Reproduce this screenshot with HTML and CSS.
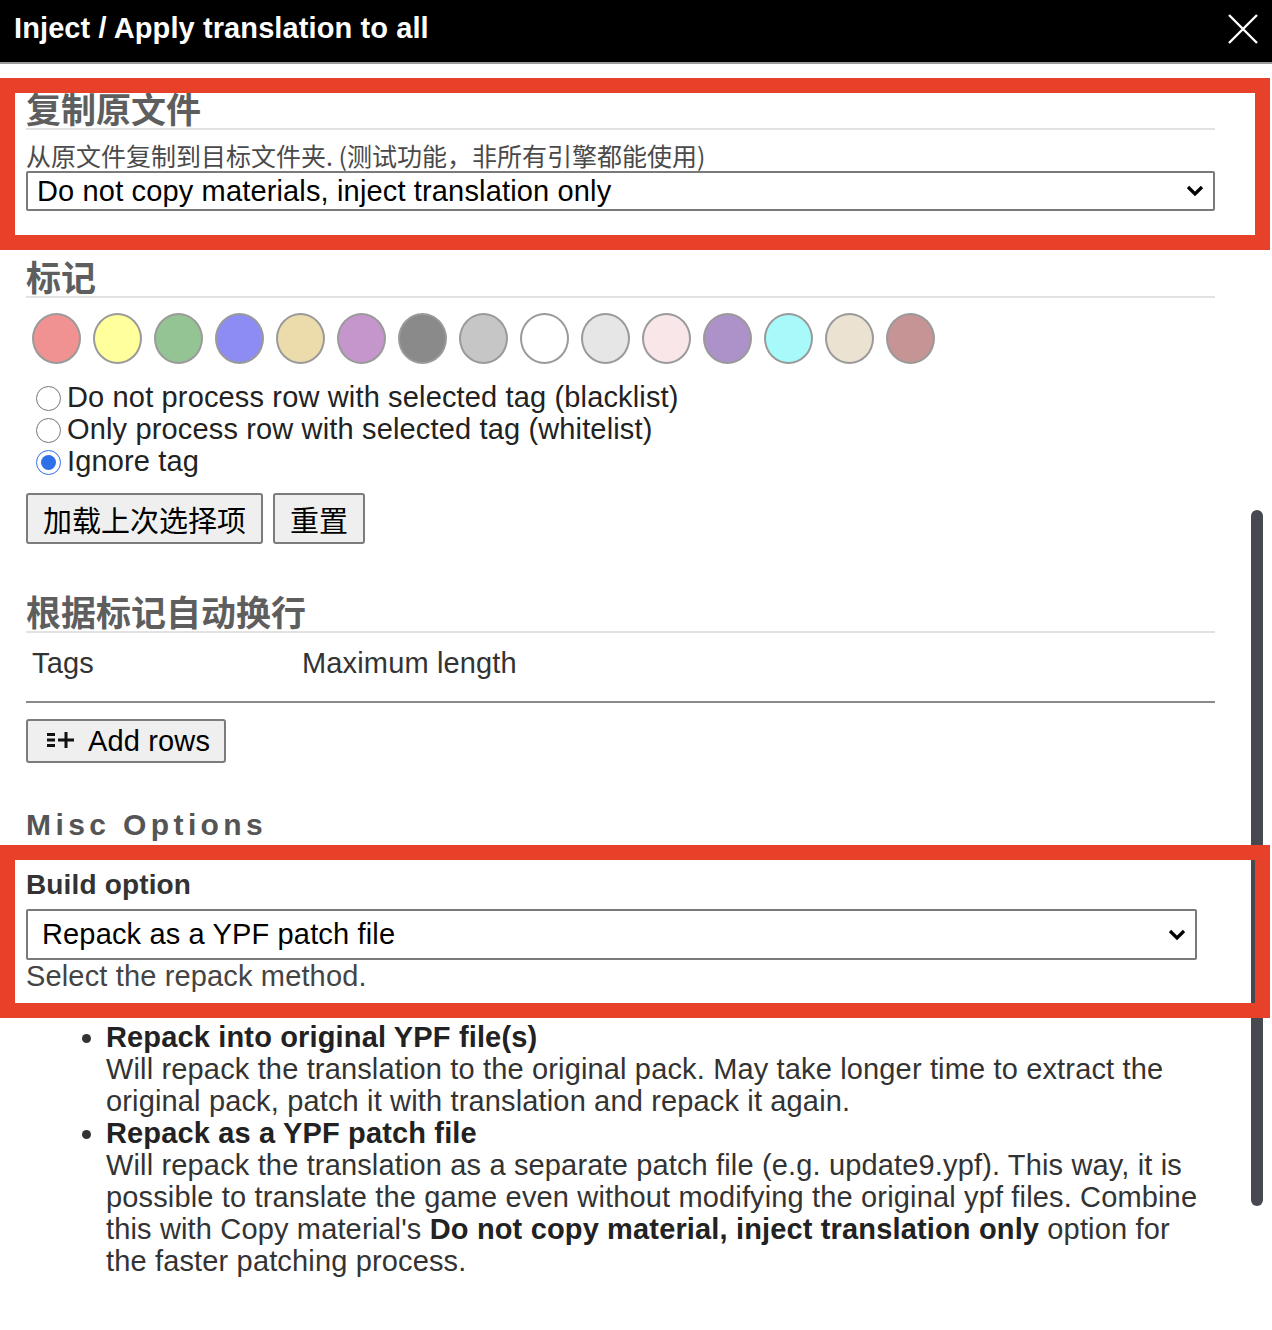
FILE: index.html
```html
<!DOCTYPE html>
<html lang="zh">
<head>
<meta charset="utf-8">
<title>Inject / Apply translation to all</title>
<link rel="stylesheet" href="styles.css">
</head>
<body>
<div class="dialog">
  <header class="titlebar">
    <span class="title">Inject / Apply translation to all</span>
    <svg class="close" width="32" height="32" viewBox="0 0 32 32"><path d="M2 2 L30 30 M30 2 L2 30" stroke="#fff" stroke-width="2.4" fill="none"/></svg>
  </header>

  <main class="content">
    <h3 class="sec-head first">复制原文件</h3>
    <div class="desc">从原文件复制到目标文件夹. (测试功能，非所有引擎都能使用)</div>
    <div class="select sel-copy">
      <span>Do not copy materials, inject translation only</span>
      <svg class="chev" width="20" height="14" viewBox="0 0 20 14"><path d="M3 3 L10 10 L17 3" stroke="#000" stroke-width="3.2" fill="none"/></svg>
    </div>

    <h3 class="sec-head tags-head">标记</h3>
    <div class="swatches">
      <span class="sw" style="background:#f09292"></span>
      <span class="sw" style="background:#ffff9c"></span>
      <span class="sw" style="background:#94c494"></span>
      <span class="sw" style="background:#8c8cf4"></span>
      <span class="sw" style="background:#ecdcac"></span>
      <span class="sw" style="background:#c496cc"></span>
      <span class="sw" style="background:#8a8a8a"></span>
      <span class="sw" style="background:#c6c6c6"></span>
      <span class="sw" style="background:#ffffff"></span>
      <span class="sw" style="background:#e6e6e6"></span>
      <span class="sw" style="background:#f8e6e8"></span>
      <span class="sw" style="background:#ac92c8"></span>
      <span class="sw" style="background:#a8fafa"></span>
      <span class="sw" style="background:#ebe2d2"></span>
      <span class="sw" style="background:#c69494"></span>
    </div>
    <div class="radios">
      <label class="radio"><input type="radio" name="t">Do not process row with selected tag (blacklist)</label>
      <label class="radio"><input type="radio" name="t">Only process row with selected tag (whitelist)</label>
      <label class="radio"><input type="radio" name="t" checked>Ignore tag</label>
    </div>
    <div class="btn-row">
      <button class="btn cjk-btn">加载上次选择项</button>
      <button class="btn cjk-btn">重置</button>
    </div>

    <h3 class="sec-head wrap-head">根据标记自动换行</h3>
    <div class="table-head">
      <span class="col-tags">Tags</span>
      <span class="col-max">Maximum length</span>
    </div>
    <button class="btn add-btn">
      <svg class="add-ico" width="30" height="16" viewBox="0 0 30 16"><rect x="1" y="1" width="8" height="3" fill="#111"/><rect x="1" y="6.5" width="8" height="3" fill="#111"/><rect x="1" y="12" width="8" height="3" fill="#111"/><rect x="12" y="6.5" width="16" height="3" fill="#111"/><rect x="18.5" y="0" width="3" height="16" fill="#111"/></svg>
      <span>Add rows</span>
    </button>

    <h3 class="misc-head">Misc Options</h3>
    <div class="field-label">Build option</div>
    <div class="select sel-build">
      <span>Repack as a YPF patch file</span>
      <svg class="chev" width="20" height="14" viewBox="0 0 20 14"><path d="M3 3 L10 10 L17 3" stroke="#000" stroke-width="3.2" fill="none"/></svg>
    </div>
    <div class="hint">Select the repack method.</div>
    <ul class="opts">
      <li><b>Repack into original YPF file(s)</b><br>Will repack the translation to the original pack. May take longer time to extract the original pack, patch it with translation and repack it again.</li>
      <li><b>Repack as a YPF patch file</b><br>Will repack the translation as a separate patch file (e.g. update9.ypf). This way, it is possible to translate the game even without modifying the original ypf files. Combine this with Copy material's <b>Do not copy material, inject translation only</b> option for the faster patching process.</li>
    </ul>
  </main>

  <div class="scrollbar"></div>
  <div class="mark mark-1"></div>
  <div class="mark mark-2"></div>
</div>
</body>
</html>
```

FILE: styles.css
```css
html, body {
  margin: 0;
  padding: 0;
  background: #fff;
}
body {
  font-family: "Liberation Sans", Arial, "Noto Sans CJK SC", sans-serif;
  color: #222;
  letter-spacing: 0.15px;
}
.dialog {
  position: relative;
  width: 1272px;
  height: 1330px;
  overflow: hidden;
}
.titlebar {
  height: 62px;
  background: #000;
  border-bottom: 2px solid #9a9a9a;
  display: flex;
  align-items: center;
  justify-content: space-between;
  padding: 0 13px 0 14px;
}
.title {
  color: #fff;
  font-weight: bold;
  font-size: 29px;
  letter-spacing: 0.1px;
  margin-top: -6px;
}
.close {
  margin-top: -4px;
}
.content {
  padding: 0 57px 0 26px;
}
.sec-head {
  margin: 0;
  font-family: "Noto Sans CJK SC", sans-serif;
  font-weight: bold;
  font-size: 35px;
  line-height: 40px;
  letter-spacing: 0;
  color: #5e5e5e;
  border-bottom: 2px solid #e2e2e2;
}
.sec-head.first { margin-top: 24px; }
.desc {
  font-family: "Noto Sans CJK SC", sans-serif;
  font-size: 25px;
  line-height: 26px;
  letter-spacing: 0;
  color: #4a4a4a;
  margin-top: 12px;
}
.select {
  box-sizing: border-box;
  display: flex;
  align-items: center;
  justify-content: space-between;
  border: 2px solid #7a7a7a;
  border-radius: 2px;
  background: #fff;
  color: #000;
  font-size: 29px;
}
.sel-copy {
  margin-top: 3px;
  height: 40px;
  padding: 0 8px 0 9px;
}
.sel-build {
  margin-top: 8px;
  height: 51px;
  width: 1171px;
  padding: 0 8px 0 14px;
}
.tags-head { margin-top: 45px; }
.swatches {
  display: flex;
  gap: 12px;
  padding-left: 6px;
  margin-top: 15px;
}
.sw {
  box-sizing: border-box;
  width: 49px;
  height: 51px;
  border-radius: 50%;
  border: 2px solid #9a9a9a;
}
.radios {
  margin-top: 17px;
}
.radio {
  display: flex;
  align-items: center;
  height: 32px;
  font-size: 29px;
  color: #222;
}
.radio input {
  width: 25px;
  height: 25px;
  margin: 2px 6px 0 10px;
  accent-color: #2f6fe8;
}
.btn-row {
  display: flex;
  gap: 10px;
  margin-top: 16px;
}
.btn {
  box-sizing: border-box;
  background: #efefef;
  border: 2px solid #7c7c7c;
  border-radius: 3px;
  color: #000;
  font-family: "Liberation Sans", Arial, "Noto Sans CJK SC", sans-serif;
  font-size: 29px;
  letter-spacing: 0.15px;
  padding: 0 14px;
}
.cjk-btn {
  height: 51px;
  font-family: "Noto Sans CJK SC", sans-serif;
  font-size: 29px;
  letter-spacing: 0;
  padding: 0 15px;
}
.wrap-head { margin-top: 47px; }
.table-head {
  display: flex;
  font-size: 29px;
  line-height: 32px;
  color: #333;
  padding: 14px 0 22px;
  border-bottom: 2px solid #8a8a8a;
}
.col-tags {
  width: 270px;
  padding-left: 6px;
}
.add-btn {
  display: flex;
  align-items: center;
  gap: 12px;
  height: 44px;
  margin-top: 16px;
  padding: 0 14px 0 18px;
}
.add-ico { margin-top: -2px; }
.misc-head {
  margin: 42px 0 0;
  font-size: 30px;
  line-height: 40px;
  letter-spacing: 4.4px;
  font-weight: bold;
  color: #555;
  border-bottom: 2px solid #e2e2e2;
}
.field-label {
  margin-top: 22px;
  font-size: 28px;
  line-height: 32px;
  font-weight: bold;
  color: #333;
}
.hint {
  font-size: 29px;
  line-height: 32px;
  color: #444;
}
.opts {
  margin: 29px 0 0;
  padding-left: 80px;
  font-size: 29px;
  line-height: 32px;
  color: #333;
}
.opts b { color: #222; }
.scrollbar {
  position: absolute;
  left: 1251px;
  top: 510px;
  width: 12px;
  height: 696px;
  border-radius: 6px;
  background: #46494f;
}
.mark {
  position: absolute;
  box-sizing: border-box;
  border: 15px solid #e8412a;
}
.mark-1 {
  left: 0;
  top: 78px;
  width: 1270px;
  height: 172px;
}
.mark-2 {
  left: 0;
  top: 845px;
  width: 1270px;
  height: 173px;
}
```
